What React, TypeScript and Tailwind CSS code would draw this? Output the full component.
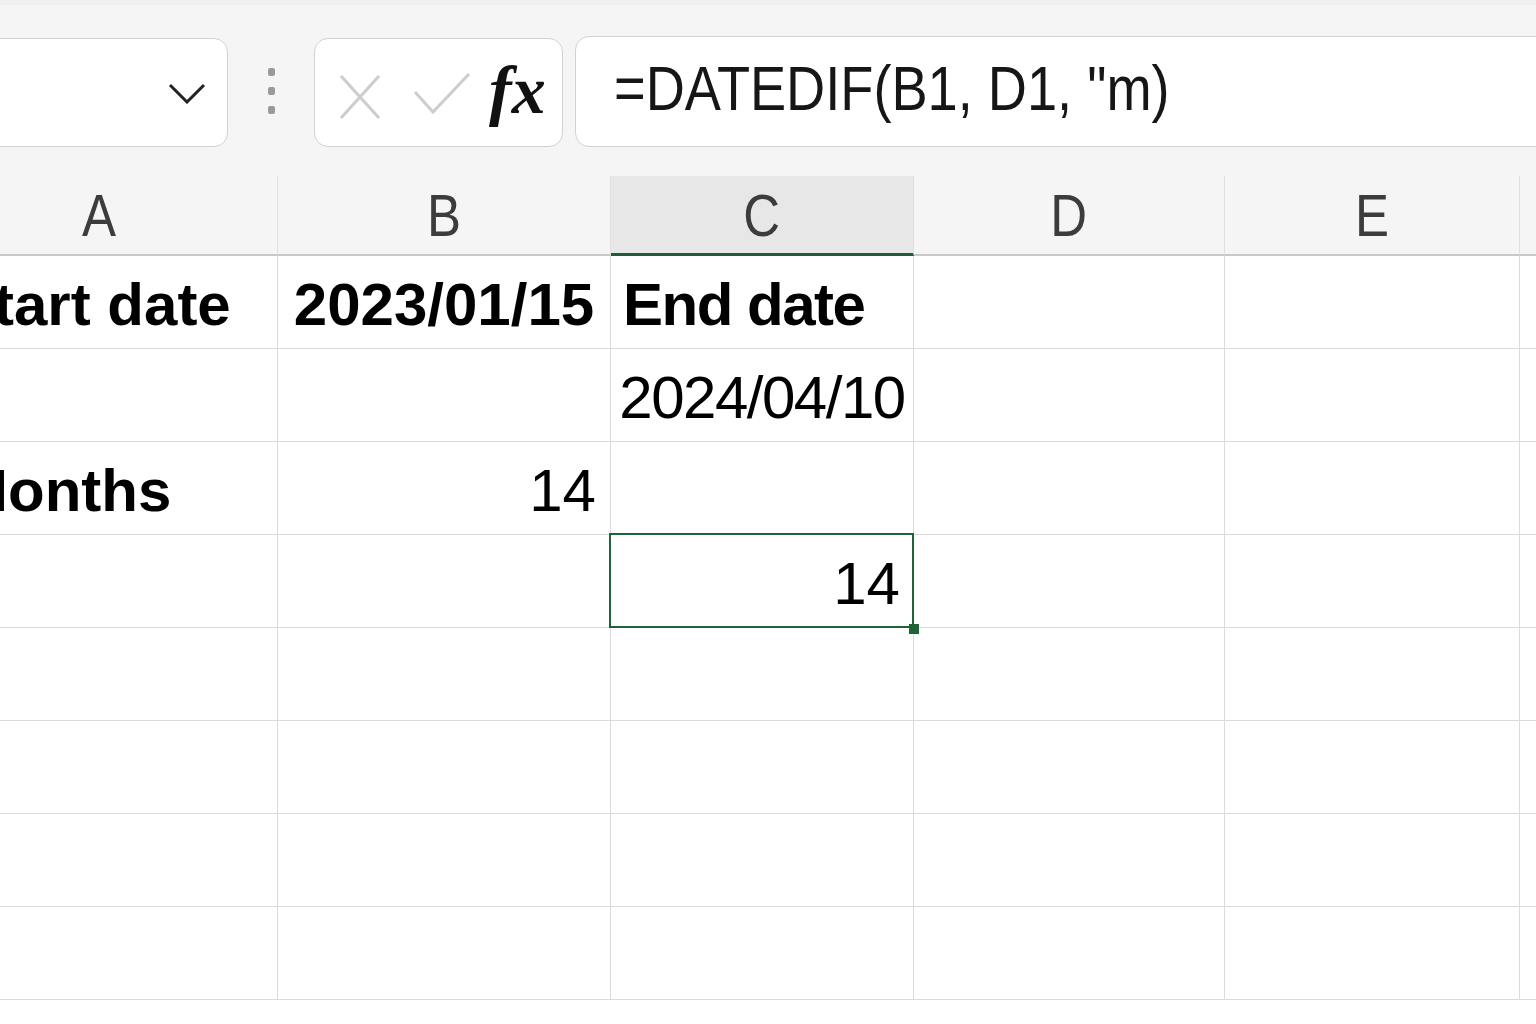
import React from 'react'

const cellFont = { fontFamily: '"Liberation Sans", Arial, sans-serif' }

const columns = ['A', 'B', 'C', 'D', 'E', '']

type Cell = { text?: string; bold?: boolean; pos?: string; tight?: boolean; selected?: boolean }

const rows: Cell[][] = [
  [{ text: 'Start date', bold: true, pos: 'justify-start pl-[32px]' }, { text: '2023/01/15', bold: true, pos: 'justify-center' }, { text: 'End date', bold: true, pos: 'justify-start pl-[12px]', tight: true }, {}, {}, {}],
  [{}, {}, { text: '2024/04/10', pos: 'justify-center', tight: true }, {}, {}, {}],
  [{ text: 'Months', bold: true, pos: 'justify-start pl-[36px]' }, { text: '14', pos: 'justify-end pr-[14px]' }, {}, {}, {}, {}],
  [{}, {}, { text: '14', pos: 'justify-end pr-[13px]', selected: true }, {}, {}, {}],
  [{}, {}, {}, {}, {}, {}],
  [{}, {}, {}, {}, {}, {}],
  [{}, {}, {}, {}, {}, {}],
  [{}, {}, {}, {}, {}, {}],
]

const App = () => {
  return (
    <div className="w-[1536px] h-[1024px] overflow-hidden bg-white">
      {/* formula bar */}
      <div className="h-[176px] bg-[#f5f5f5] border-t-[5px] border-[#efefef] flex items-start pt-[33px]">
        <div className="-ml-[14px] w-[242px] h-[109px] bg-white border border-[#d2d2d2] rounded-[14px] flex items-center justify-end pr-[21px]">
          <svg width="38" height="22" viewBox="0 0 38 22" fill="none">
            <polyline points="2,3 19,20 36,3" stroke="#222" strokeWidth="3" />
          </svg>
        </div>
        <div className="w-[86px] h-[109px] flex flex-col items-center justify-center gap-[11px] pb-[3px]">
          <div className="w-[7px] h-[8px] rounded-[2px] bg-[#9a9a9a]" />
          <div className="w-[7px] h-[8px] rounded-[2px] bg-[#9a9a9a]" />
          <div className="w-[7px] h-[8px] rounded-[2px] bg-[#9a9a9a]" />
        </div>
        <div className="w-[249px] h-[109px] bg-white border border-[#d2d2d2] rounded-[14px] flex items-center pl-[24px]">
          <svg width="42" height="46" viewBox="0 0 42 46" fill="none" className="mt-[8px]">
            <line x1="2" y1="2" x2="40" y2="44" stroke="#cdcdcd" strokeWidth="3" />
            <line x1="40" y1="2" x2="2" y2="44" stroke="#cdcdcd" strokeWidth="3" />
          </svg>
          <svg width="58" height="44" viewBox="0 0 58 44" fill="none" className="ml-[32px] mt-[2px]">
            <polyline points="2,20 20,40 56,2" stroke="#cdcdcd" strokeWidth="3" />
          </svg>
          <span
            className="ml-[18px] text-[68px] italic font-semibold leading-none text-[#111] -mt-[6px]"
            style={{ fontFamily: '"Liberation Serif", "Times New Roman", serif' }}
          >
            fx
          </span>
        </div>
        <div className="ml-[12px] flex-1 -mr-[20px] h-[111px] -mt-[2px] bg-white border border-[#d2d2d2] rounded-[14px] flex items-center pl-[38px]">
          <span className="text-[63px] leading-none text-[#161616] -mt-[6px] origin-left scale-x-[0.86] whitespace-nowrap" style={cellFont}>
            =DATEDIF(B1, D1, "m)
          </span>
        </div>
      </div>

      {/* sheet */}
      <div className="-ml-[78px] grid grid-cols-[356px_333px_303px_311px_295px_320px]" style={cellFont}>
        {columns.map((c) => (
          <div
            key={'h' + c}
            className={
              c === 'C'
                ? 'h-[80px] bg-[#e7e7e7] border-r border-[#dedede] border-b-[3px] border-b-[#1d5e35] flex items-center justify-center'
                : 'h-[80px] bg-[#f5f5f5] border-r border-[#e0e0e0] border-b-2 border-b-[#c8c8c8] flex items-center justify-center'
            }
          >
            <span className="text-[60px] leading-none text-[#3c3c3c] mt-[2px] scale-x-[0.85]">{c}</span>
          </div>
        ))}
        {rows.map((row, ri) =>
          row.map((cell, ci) => (
            <div
              key={ri + '-' + ci}
              className={`relative h-[93px] border-r border-b border-[#dadada] flex items-center ${cell.pos ?? ''}`}
            >
              {cell.text && (
                <span
                  className={`text-[60px] leading-none text-black whitespace-nowrap mt-[6px] ${
                    cell.bold ? 'font-bold' : 'font-normal'
                  } ${cell.tight ? 'tracking-[-1.5px]' : ''}`}
                >
                  {cell.text}
                </span>
              )}
              {cell.selected && (
                <>
                  <div className="absolute z-10 -left-[2px] -top-[2px] -right-[1px] -bottom-[1px] border-2 border-[#1e6437]" />
                  <div className="absolute z-10 -right-[6px] -bottom-[7px] w-[10px] h-[10px] bg-[#1e6437]" />
                </>
              )}
            </div>
          ))
        )}
      </div>
    </div>
  )
}

export default App
